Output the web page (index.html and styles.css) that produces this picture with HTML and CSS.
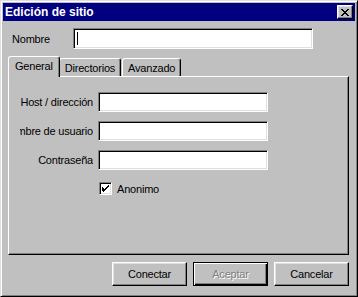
FILE: index.html
```html
<!DOCTYPE html>
<html>
<head>
<meta charset="utf-8">
<link rel="stylesheet" href="styles.css">
</head>
<body>
<div class="window">
  <div class="titlebar">
    <span class="title">Edición de sitio</span>
    <button class="close" aria-label="Cerrar">
      <svg width="8" height="7" viewBox="0 0 8 7"><path d="M0 0h2v1h1v1h2V1h1V0h2v1H7v1H6v1H5v1h1v1h1v1h1v1H6V6H5V5H3v1H2v1H0V6h1V5h1V4h1V3H2V2H1V1H0z" fill="#000"/></svg>
    </button>
  </div>
  <div class="content">
    <div class="name-row">
      <label class="name-label">Nombre</label>
      <div class="field name-field"><span class="caret"></span></div>
    </div>
    <div class="tabs">
      <div class="tab active">General</div>
      <div class="tab">Directorios</div>
      <div class="tab">Avanzado</div>
    </div>
    <div class="panel">
      <div class="form">
        <div class="lbl"><span>Host / dirección</span></div>
        <div class="field"></div>
        <div class="lbl"><span>Nombre de usuario</span></div>
        <div class="field"></div>
        <div class="lbl"><span>Contraseña</span></div>
        <div class="field"></div>
      </div>
      <div class="check-row">
        <span class="checkbox">
          <svg width="7" height="7" viewBox="0 0 7 7"><path d="M6 0h1v2H6v1H5v1H4v1H3v1H2v1H1V6H0V2h1v1h1v1h1V3h1V2h1V1h1z" fill="#000"/></svg>
        </span>
        <span class="check-label">Anonimo</span>
      </div>
    </div>
    <div class="buttons">
      <button class="btn">Conectar</button>
      <button class="btn default disabled">Aceptar</button>
      <button class="btn">Cancelar</button>
    </div>
  </div>
</div>
</body>
</html>
```

FILE: styles.css
```css
* { box-sizing: border-box; }
html, body { margin: 0; padding: 0; background: #c0c0c0; }
body {
  font-family: "Liberation Sans", Arial, sans-serif;
  font-size: 11px;
  color: #000;
}
.window {
  width: 358px;
  height: 297px;
  background: #c0c0c0;
  border: 1px solid;
  border-color: #dfdfdf #000 #000 #dfdfdf;
  box-shadow: inset 1px 1px #fff, inset -1px -1px #808080;
  padding: 2px;
  display: flex;
  flex-direction: column;
}
.titlebar {
  height: 18px;
  background: #000080;
  display: flex;
  align-items: center;
  justify-content: space-between;
  padding: 0 2px 0 2px;
}
.title {
  color: #fff;
  font-weight: bold;
  font-size: 12px;
  letter-spacing: 0;
}
.close {
  width: 16px;
  height: 14px;
  padding: 0;
  margin: 0;
  background: #c0c0c0;
  border: 1px solid;
  border-color: #fff #000 #000 #fff;
  box-shadow: inset -1px -1px #808080, inset 1px 1px #dfdfdf;
  display: flex;
  align-items: center;
  justify-content: center;
}
.content {
  flex: 1;
  padding: 7px 6px 0 5px;
  display: flex;
  flex-direction: column;
}
.name-row {
  display: flex;
  align-items: center;
  height: 21px;
}
.name-label {
  width: 65px;
  padding-left: 4px;
  letter-spacing: -0.2px;
}
.field {
  background: #fff;
  border: 1px solid;
  border-color: #808080 #fff #fff #808080;
  box-shadow: inset 1px 1px #000, inset -1px -1px #dfdfdf;
  height: 20px;
}
.name-field {
  width: 240px;
  height: 21px;
  position: relative;
}
.caret {
  position: absolute;
  left: 3px;
  top: 3px;
  width: 1px;
  height: 13px;
  background: #000;
}
.tabs {
  display: flex;
  align-items: flex-end;
  margin-top: 6px;
  padding-left: 1px;
  height: 21px;
  position: relative;
  z-index: 1;
}
.tab {
  height: 18px;
  padding: 0 5px;
  border: 1px solid;
  border-bottom: none;
  border-color: #fff #000 transparent #fff;
  border-radius: 3px 3px 0 0;
  box-shadow: inset -1px 0 #808080;
  display: flex;
  align-items: center;
  letter-spacing: -0.2px;
  background: #c0c0c0;
}
.tab.active {
  height: 21px;
  margin-bottom: -1px;
  padding: 0 6px 3px;
  margin-left: -1px;
  margin-right: -1px;
  position: relative;
}
.tab + .tab { margin-left: 1px; }
.tab.active + .tab { margin-left: 0; }
.panel {
  height: 179px;
  border: 1px solid;
  border-color: #fff #000 #000 #fff;
  box-shadow: inset -1px -1px #808080;
  padding: 15px 0 0 11px;
}
.form {
  display: grid;
  grid-template-columns: 73px 170px;
  grid-auto-rows: 20px;
  column-gap: 5px;
  row-gap: 9px;
}
.lbl {
  display: flex;
  justify-content: flex-end;
  align-items: center;
  overflow: hidden;
  white-space: nowrap;
  letter-spacing: -0.2px;
}
.lbl span { flex-shrink: 0; }
.check-row {
  display: flex;
  align-items: center;
  margin-top: 12px;
  margin-left: 79px;
  height: 13px;
}
.checkbox {
  width: 13px;
  height: 13px;
  background: #fff;
  border: 1px solid;
  border-color: #808080 #fff #fff #808080;
  box-shadow: inset 1px 1px #000, inset -1px -1px #dfdfdf;
  display: flex;
  align-items: center;
  justify-content: center;
}
.check-label {
  margin-left: 5px;
  letter-spacing: -0.2px;
}
.buttons {
  display: flex;
  justify-content: flex-end;
  gap: 6px;
  margin-top: 7px;
}
.btn {
  width: 75px;
  height: 24px;
  padding: 0;
  font: inherit;
  letter-spacing: -0.2px;
  color: #000;
  background: #c0c0c0;
  border: 1px solid;
  border-color: #fff #000 #000 #fff;
  box-shadow: inset -1px -1px #808080, inset 1px 1px #dfdfdf;
}
.btn.default {
  border: 1px solid #000;
  box-shadow: inset 1px 1px #fff, inset -1px -1px #000, inset -2px -2px #808080;
}
.btn.disabled {
  color: #808080;
  text-shadow: 1px 1px #fff;
}
```
